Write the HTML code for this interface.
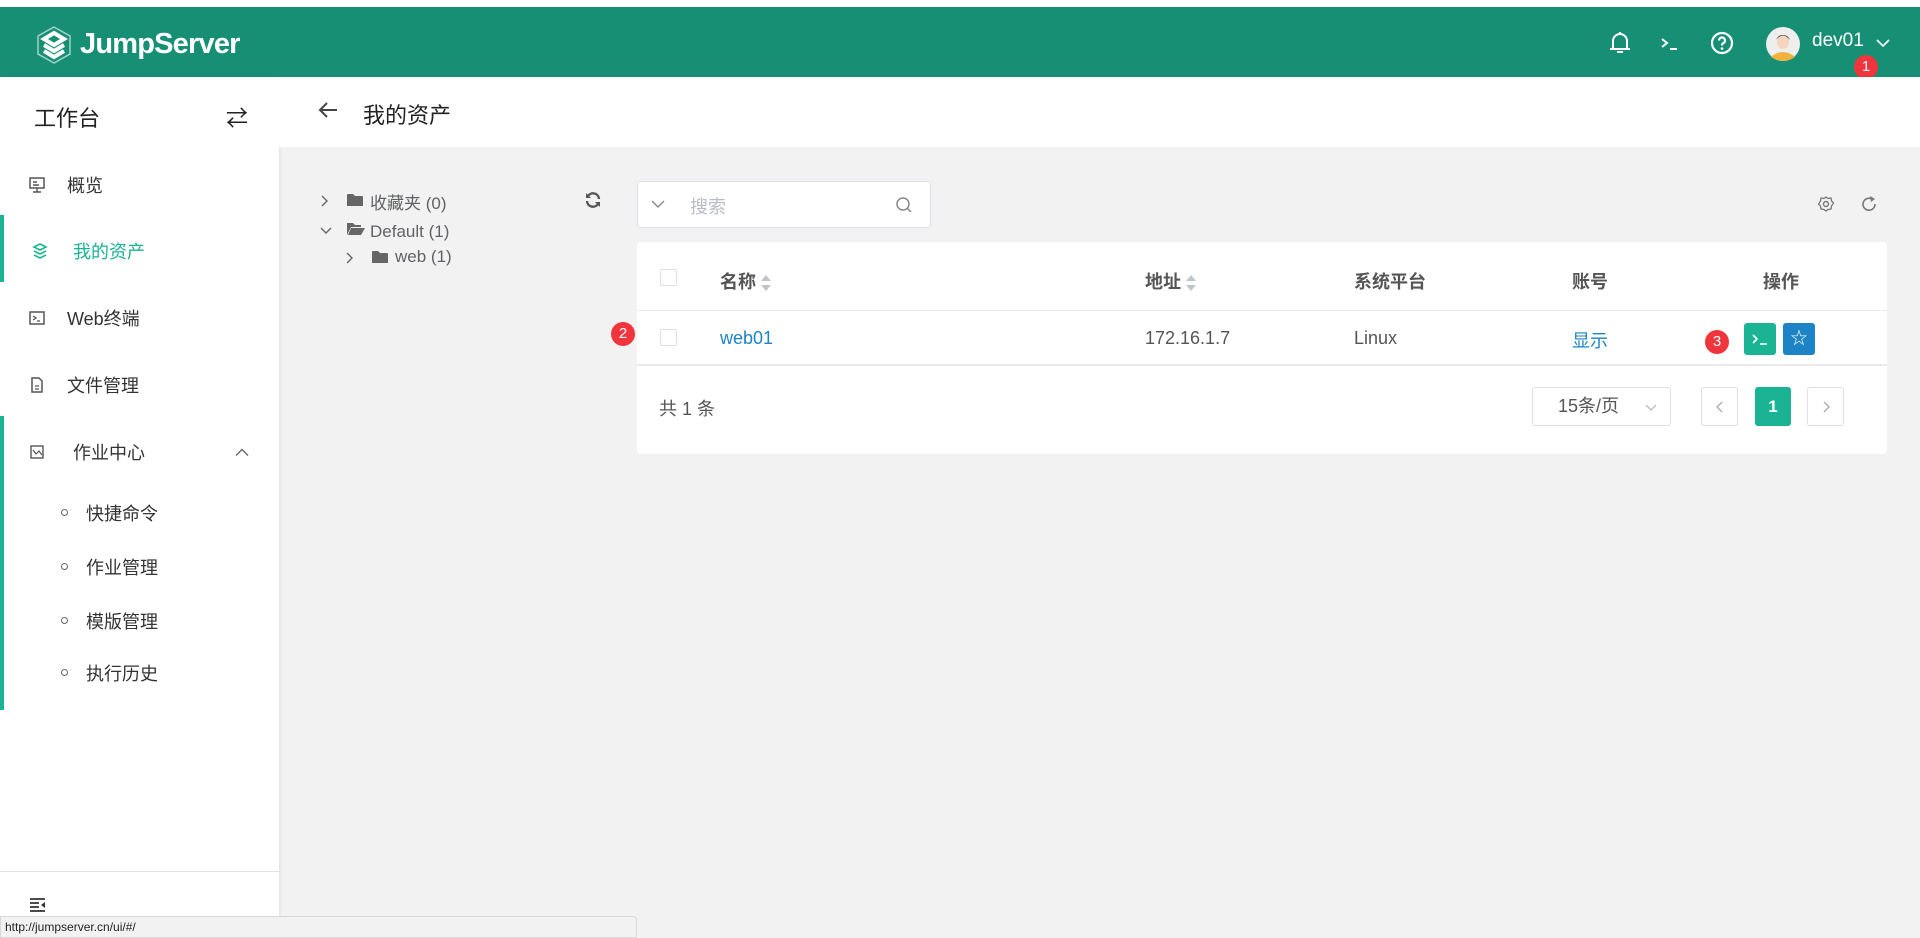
<!DOCTYPE html>
<html><head><meta charset="utf-8">
<style>
*{box-sizing:border-box;margin:0;padding:0}
body{width:1920px;height:938px;overflow:hidden;background:#f2f2f2;font-family:"Liberation Sans","Noto Sans CJK SC",sans-serif;color:#606266;position:relative}
.abs{position:absolute}
#top{left:0;top:0;width:1920px;height:7px;background:#fff}
#hdr{left:0;top:7px;width:1920px;height:70px;background:#178f75}
#side{left:0;top:77px;width:279px;height:861px;background:#fff;box-shadow:1px 0 3px rgba(0,0,0,.08)}
#ph{left:279px;top:77px;width:1641px;height:70px;background:#fff}
.mi{position:absolute;left:0;width:279px;font-size:18px;color:#333}
.mi svg{position:absolute;left:28px;top:50%;transform:translateY(-50%)}
.sub{position:absolute;left:86px;font-size:18px;color:#333}
.sub:before{content:"";position:absolute;left:-25px;top:9px;width:5px;height:5px;border:1px solid #666;border-radius:50%}
.card{left:637px;top:242px;width:1250px;height:212px;background:#fff;border-radius:4px}
.th{position:absolute;top:268px;font-size:18px;font-weight:bold;color:#555}
.td{position:absolute;top:328px;font-size:18px;color:#555}
.cb{position:absolute;width:17px;height:17px;border:1px solid #dcdfe6;border-radius:2px;background:#fff}
.badge{position:absolute;width:24px;height:24px;border-radius:50%;background:#f0353d;color:#fff;font-size:15px;text-align:center;line-height:24px}
.pg{position:absolute;top:387px;height:39px;border:1px solid #dcdfe6;border-radius:3px;background:#fff}
.sort{display:inline-block;vertical-align:middle;margin-left:4px}
</style></head><body>
<div id="top" class="abs"></div>
<div id="hdr" class="abs">
 <svg class="abs" style="left:34px;top:18px" width="40" height="40" viewBox="0 0 40 40"><path d="M20 2 L36 11 V29 L20 38 L4 29 V11 Z" fill="none" stroke="#fff" stroke-width="1.5" opacity=".6"/><path d="M10 14 L20 8 L30 14 L20 20 Z M10 20 L20 26 L30 20 M10 26 L20 32 L30 26" fill="none" stroke="#fff" stroke-width="4"/></svg>
 <div class="abs" style="left:80px;top:21px;font-size:29px;font-weight:bold;color:#fff;letter-spacing:-0.8px">JumpServer</div>
 <svg class="abs" style="left:1608px;top:23px" width="24" height="26" viewBox="0 0 24 26"><path d="M5 19 V11 a7 7 0 0 1 14 0 V19 M2 19 H22 M9 22 H15 M12 2 V4" fill="none" stroke="#fff" stroke-width="2"/></svg>
 <svg class="abs" style="left:1661px;top:30px" width="18" height="14" viewBox="0 0 18 14"><path d="M1 2 L6 6 L1 10 M9 12 H16" fill="none" stroke="#fff" stroke-width="2"/></svg>
 <svg class="abs" style="left:1710px;top:24px" width="24" height="24" viewBox="0 0 24 24"><circle cx="12" cy="12" r="10" fill="none" stroke="#fff" stroke-width="2.2"/><path d="M9 9.5 a3 3 0 1 1 4 2.8 c-1 .5 -1 1 -1 2.2" fill="none" stroke="#fff" stroke-width="2.2"/><circle cx="12" cy="17.5" r="1.3" fill="#fff"/></svg>
 <svg class="abs" style="left:1766px;top:20px" width="34" height="34" viewBox="0 0 34 34"><circle cx="17" cy="17" r="17" fill="#eee"/><path d="M5 30 Q17 20 29 30 Q17 38 5 30Z" fill="#f0b23c"/><ellipse cx="17" cy="15" rx="6" ry="7" fill="#f5d5c0"/><path d="M10 13 Q17 4 24 13 Q22 8 17 8 Q12 8 10 13Z" fill="#222"/></svg>
 <div class="abs" style="left:1812px;top:23px;color:#fff;font-size:19px">dev01</div>
 <svg class="abs" style="left:1876px;top:32px" width="14" height="9" viewBox="0 0 14 9"><path d="M1 1 L7 7 L13 1" fill="none" stroke="#fff" stroke-width="1.6"/></svg>
</div>
<div class="badge" style="left:1854px;top:55px">1</div>
<div id="side" class="abs"></div>
<div class="abs" style="left:34px;top:101px;font-size:22px;color:#222">工作台</div>
<div class="abs" style="left:226px;top:101px;font-size:22px;color:#222">⇄</div>
<div class="mi" style="top:172px;height:26px"><svg width="18" height="18" viewBox="0 0 18 18"><rect x="2" y="2" width="14" height="10" fill="none" stroke="#555" stroke-width="1.5"/><path d="M9 12 V16 M5 16 H13 M5 6 H9 M5 9 H11" stroke="#555" stroke-width="1.4"/></svg><span style="position:absolute;left:67px">概览</span></div>
<div class="abs" style="left:0;top:215px;width:4px;height:67px;background:#1ab394"></div>
<div class="mi" style="top:238px;height:26px;color:#1ab394"><svg style="left:32px" width="16" height="18" viewBox="0 0 16 18"><path d="M2 5 L8 2 L14 5 L8 8 Z M2 9 L8 12 L14 9 M2 13 L8 16 L14 13" fill="none" stroke="#1ab394" stroke-width="1.6"/></svg><span style="position:absolute;left:73px">我的资产</span></div>
<div class="mi" style="top:305px;height:26px"><svg width="18" height="18" viewBox="0 0 18 18"><rect x="2" y="3" width="14" height="12" fill="none" stroke="#555" stroke-width="1.5"/><path d="M5 7 L8 9 L5 11 M9 12 H12" fill="none" stroke="#555" stroke-width="1.3"/></svg><span style="position:absolute;left:67px">Web终端</span></div>
<div class="mi" style="top:372px;height:26px"><svg width="18" height="18" viewBox="0 0 18 18"><path d="M4 2 H11 L14 5 V16 H4 Z" fill="none" stroke="#555" stroke-width="1.5"/><path d="M7 10 H11 M7 13 H11" stroke="#555" stroke-width="1.3"/></svg><span style="position:absolute;left:67px">文件管理</span></div>
<div class="abs" style="left:0;top:416px;width:4px;height:294px;background:#1ab394"></div>
<div class="mi" style="top:439px;height:26px"><svg width="18" height="18" viewBox="0 0 18 18"><rect x="3" y="3" width="12" height="12" fill="none" stroke="#555" stroke-width="1.4"/><path d="M5 7 L8 11 L11 8 L14 12" fill="none" stroke="#555" stroke-width="1.2"/></svg><span style="position:absolute;left:73px">作业中心</span><svg style="left:235px" width="14" height="9" viewBox="0 0 14 9"><path d="M1 8 L7 2 L13 8" fill="none" stroke="#666" stroke-width="1.4"/></svg></div>
<div class="sub" style="top:500px">快捷命令</div>
<div class="sub" style="top:554px">作业管理</div>
<div class="sub" style="top:608px">模版管理</div>
<div class="sub" style="top:660px">执行历史</div>
<div class="abs" style="left:0;top:871px;width:279px;height:1px;background:#e2e2e2"></div>
<svg class="abs" style="left:29px;top:897px" width="18" height="16" viewBox="0 0 18 16"><path d="M1 2 H16 M1 6 H10 M1 10 H10 M1 14 H16" stroke="#333" stroke-width="1.8"/><path d="M16 5 L12 8 L16 11Z" fill="#333"/></svg>
<div class="abs" style="left:0;top:916px;width:637px;height:22px;background:#f2f2f2;border:1px solid #d8d8d8;border-radius:0 4px 0 0;font-size:12px;color:#222;padding:3px 4px">http://jumpserver.cn/ui/#/</div>
<div id="ph" class="abs"></div>
<svg class="abs" style="left:317px;top:101px" width="22" height="18" viewBox="0 0 22 18"><path d="M20 9 H3 M10 2 L3 9 L10 16" fill="none" stroke="#444" stroke-width="2"/></svg>
<div class="abs" style="left:363px;top:98px;font-size:22px;color:#222">我的资产</div>
<!-- tree -->
<svg class="abs" style="left:320px;top:195px" width="10" height="12" viewBox="0 0 10 12"><path d="M2 1 L7 6 L2 11" fill="none" stroke="#666" stroke-width="1.4"/></svg>
<svg class="abs" style="left:320px;top:226px" width="12" height="10" viewBox="0 0 12 10"><path d="M1 2 L6 7 L11 2" fill="none" stroke="#666" stroke-width="1.4"/></svg>
<svg class="abs" style="left:345px;top:252px" width="10" height="12" viewBox="0 0 10 12"><path d="M2 1 L7 6 L2 11" fill="none" stroke="#666" stroke-width="1.4"/></svg>
<svg class="abs" style="left:347px;top:193px" width="16" height="14" viewBox="0 0 16 14"><path d="M0 2 Q0 1 1 1 H6 L8 3 H15 Q16 3 16 4 V13 H0Z" fill="#666"/></svg>
<svg class="abs" style="left:347px;top:222px" width="18" height="14" viewBox="0 0 18 14"><path d="M0 1 H6 L8 3 H14 V5 H4 L0 13Z M4 6 H18 L14 13 H1Z" fill="#666"/></svg>
<svg class="abs" style="left:372px;top:250px" width="16" height="14" viewBox="0 0 16 14"><path d="M0 2 Q0 1 1 1 H6 L8 3 H15 Q16 3 16 4 V13 H0Z" fill="#666"/></svg>
<div class="abs" style="left:370px;top:190px;font-size:17px;color:#606266;line-height:28px">收藏夹 (0)<br>Default (1)</div>
<div class="abs" style="left:395px;top:246px;font-size:17px;color:#606266;line-height:22px">web (1)</div>
<svg class="abs" style="left:584px;top:191px" width="18" height="18" viewBox="0 0 18 18"><path d="M15 8 A6 6 0 0 0 4 5 M3 10 A6 6 0 0 0 14 13" fill="none" stroke="#555" stroke-width="2.4"/><path d="M2 2 V7 H7Z M16 16 V11 H11Z" fill="#555"/></svg>
<!-- search -->
<div class="abs" style="left:637px;top:181px;width:294px;height:47px;background:#fff;border:1px solid #dcdfe6;border-radius:3px"></div>
<svg class="abs" style="left:651px;top:200px" width="14" height="9" viewBox="0 0 14 9"><path d="M1 1 L7 7 L13 1" fill="none" stroke="#888" stroke-width="1.4"/></svg>
<div class="abs" style="left:690px;top:193px;font-size:18px;color:#b8bcc4">搜索</div>
<svg class="abs" style="left:895px;top:196px" width="18" height="18" viewBox="0 0 18 18"><circle cx="8" cy="8" r="6" fill="none" stroke="#888" stroke-width="1.5"/><path d="M12.5 12.5 L16 16" stroke="#888" stroke-width="1.5"/></svg>
<svg class="abs" style="left:1817px;top:195px" width="18" height="18" viewBox="0 0 18 18"><circle cx="9" cy="9" r="2.5" fill="none" stroke="#777" stroke-width="1.4"/><path d="M9 2 L11 3.5 L14 3 L14.5 6 L16.5 8 L14.5 11 L14 14 L11 14.5 L9 16 L7 14.5 L4 14 L3.5 11 L1.5 9 L3.5 6 L4 3 L7 3.5 Z" fill="none" stroke="#777" stroke-width="1.3"/></svg>
<svg class="abs" style="left:1861px;top:195px" width="17" height="18" viewBox="0 0 17 18"><path d="M14 9 A6 6 0 1 1 11 4" fill="none" stroke="#777" stroke-width="1.6"/><path d="M9 1 L14 4 L10 7Z" fill="#777"/></svg>
<!-- card -->
<div class="card abs"></div>
<div class="abs" style="left:637px;top:310px;width:1250px;height:1px;background:#e8eaee"></div>
<div class="abs" style="left:637px;top:364px;width:1250px;height:2px;background:#e8eaee"></div>
<div class="cb" style="left:660px;top:269px"></div>
<div class="th" style="left:720px">名称<svg class="sort" width="12" height="18" viewBox="0 0 12 18"><path d="M6 1 L11 7 H1Z M6 17 L11 11 H1Z" fill="#c0c4cc"/></svg></div>
<div class="th" style="left:1145px">地址<svg class="sort" width="12" height="18" viewBox="0 0 12 18"><path d="M6 1 L11 7 H1Z M6 17 L11 11 H1Z" fill="#c0c4cc"/></svg></div>
<div class="th" style="left:1354px">系统平台</div>
<div class="th" style="left:1572px">账号</div>
<div class="th" style="left:1763px">操作</div>
<div class="cb" style="left:660px;top:329px"></div>
<div class="td" style="left:720px;color:#1c84c6">web01</div>
<div class="td" style="left:1145px">172.16.1.7</div>
<div class="td" style="left:1354px">Linux</div>
<div class="td" style="left:1572px;color:#1c84c6;top:327px">显示</div>
<div class="badge" style="left:611px;top:322px">2</div>
<div class="badge" style="left:1705px;top:330px">3</div>
<div class="abs" style="left:1744px;top:323px;width:32px;height:32px;background:#1ab394;border-radius:3px"><svg style="position:absolute;left:8px;top:10px" width="16" height="13" viewBox="0 0 16 13"><path d="M1 2 L5 6 L1 10 M8 11 H15" fill="none" stroke="#fff" stroke-width="1.6"/></svg></div>
<div class="abs" style="left:1783px;top:323px;width:32px;height:32px;background:#1c84c6;border-radius:3px;color:#fff;font-size:17px;text-align:center;line-height:31px">☆</div>
<div class="abs" style="left:659px;top:395px;font-size:18px;color:#555">共 1 条</div>
<div class="pg" style="left:1532px;width:139px;font-size:18px;color:#555;padding:7px 0 0 25px;line-height:22px">15条/页<svg style="position:absolute;right:13px;top:16px" width="12" height="8" viewBox="0 0 12 8"><path d="M1 1 L6 6 L11 1" fill="none" stroke="#bbb" stroke-width="1.3"/></svg></div>
<div class="pg" style="left:1701px;width:37px"><svg style="position:absolute;left:14px;top:13px" width="8" height="12" viewBox="0 0 8 12"><path d="M6 1 L1 6 L6 11" fill="none" stroke="#aaa" stroke-width="1.3"/></svg></div>
<div class="pg" style="left:1755px;width:36px;background:#1ab394;border-color:#1ab394;color:#fff;text-align:center;line-height:37px;font-size:17px;font-weight:bold">1</div>
<div class="pg" style="left:1807px;width:37px"><svg style="position:absolute;left:14px;top:13px" width="8" height="12" viewBox="0 0 8 12"><path d="M2 1 L7 6 L2 11" fill="none" stroke="#aaa" stroke-width="1.3"/></svg></div>
</body></html>
